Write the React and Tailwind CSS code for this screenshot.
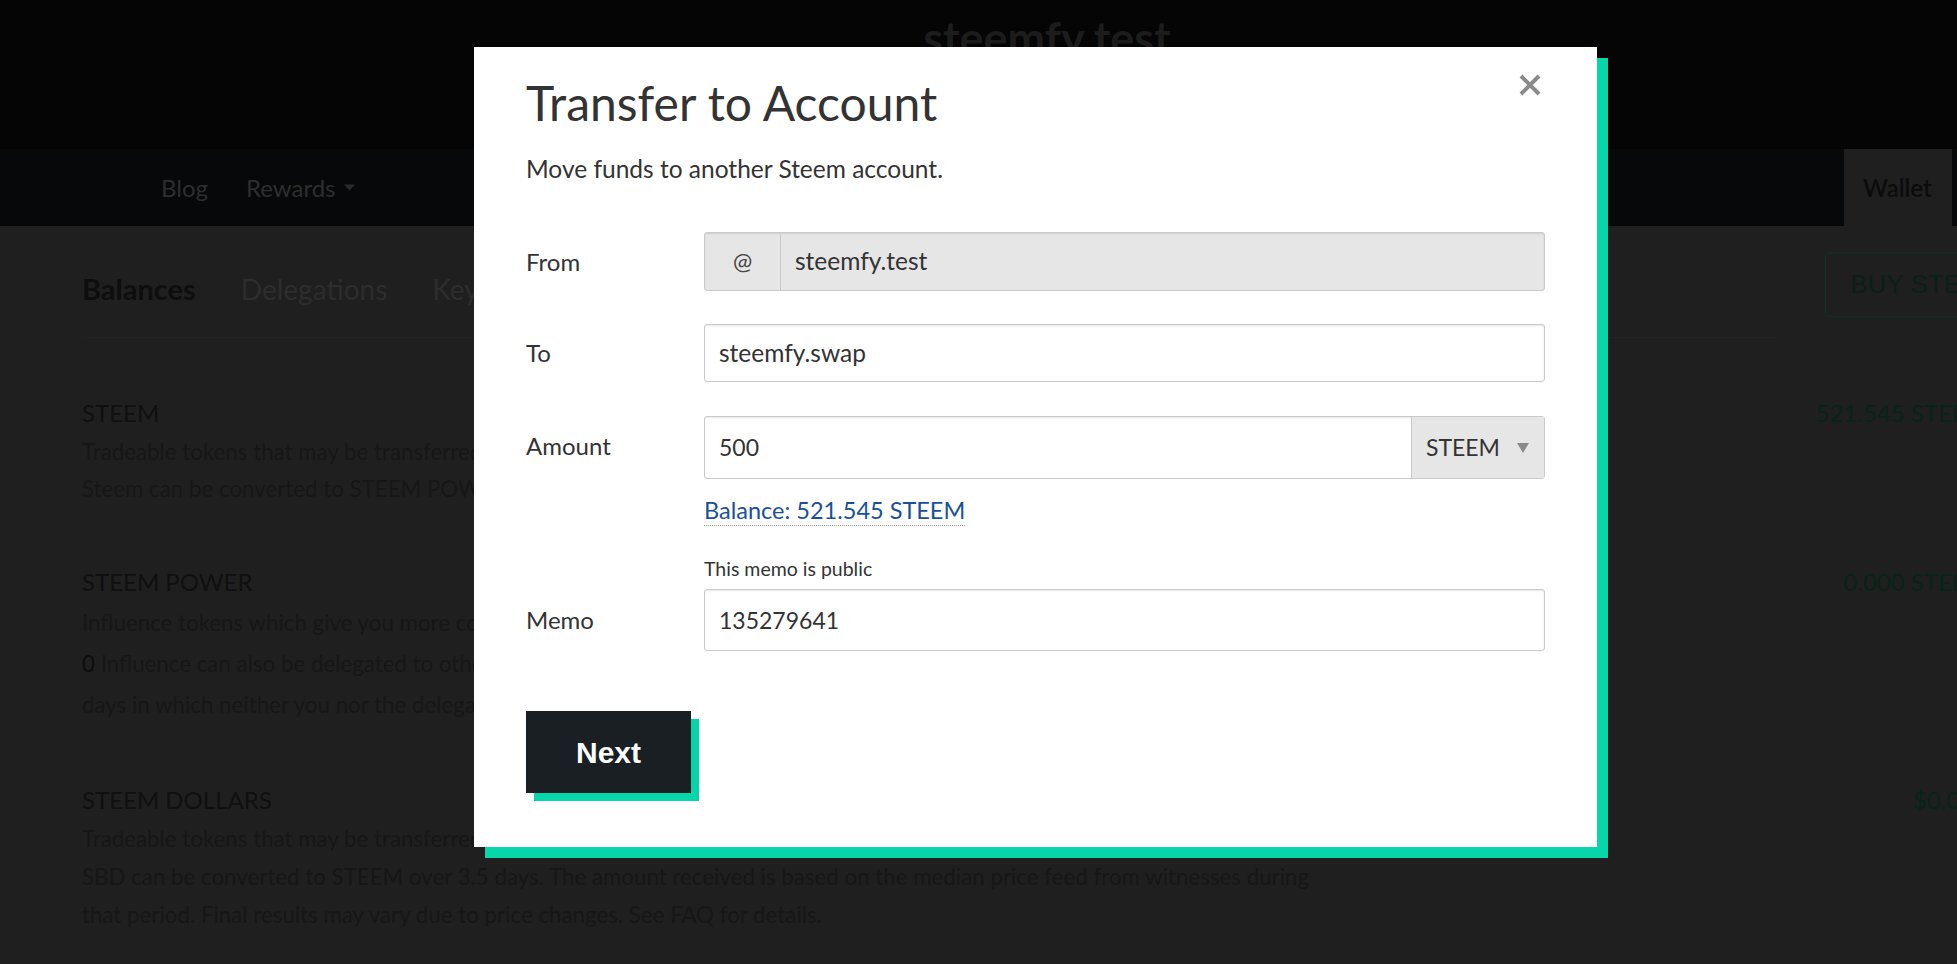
export default function App() {
  const inputBase =
    "border border-[#cacaca] rounded-[3px] shadow-[inset_0_1px_2px_rgba(10,10,10,0.1)]";
  return (
    <div className="relative w-[1957px] h-[964px] overflow-hidden bg-[#1f1f1f] font-['Lato',sans-serif]">
      {/* header */}
      <header className="h-[149px] bg-[#050505] flex justify-center pl-[137px] pt-[11px]">
        <div className="text-[45px] leading-[54px] font-bold text-[#1c1c1c]">steemfy.test</div>
      </header>
      {/* nav */}
      <nav className="h-[77px] bg-[#07080a] flex items-stretch">
        <div className="flex items-center pl-[161px] gap-[38px] text-[24px] text-[#2e2e2e]">
          <span>Blog</span>
          <span className="flex items-center gap-[8px]">
            Rewards
            <svg width="11" height="7" viewBox="0 0 11 7">
              <path d="M0 0.5 L11 0.5 L5.5 6.5 Z" fill="#2a2a2a" />
            </svg>
          </span>
        </div>
        <div className="ml-auto mr-[5px] w-[108px] bg-[#1f1f1f] flex items-center pl-[19px] text-[24px] font-semibold text-[#0c0c0c]">
          Wallet
        </div>
      </nav>
      {/* main */}
      <main className="pl-[82px] pt-[26px]">
        <div className="flex w-[1943px] h-[65px] items-center justify-between">
          <div className="flex items-center gap-[45px] pt-[8px]">
            <span className="text-[29px] font-bold text-[#0e0e0e]">Balances</span>
            <span className="text-[28px] text-[#2d2d2d]">Delegations</span>
            <span className="text-[28px] text-[#2d2d2d]">Keys &amp; Permissions</span>
          </div>
          <div className="h-[65px] border border-[#0c3326] rounded-[5px] px-[24px] flex items-center text-[26px] text-[#0a2018] font-['Liberation_Sans',Arial,sans-serif]">
            BUY STEEM
          </div>
        </div>
        <div className="mt-[20px] w-[1694px] border-t border-[#222222]" />

        <div className="w-[1906px]">
          {/* STEEM */}
          <section className="mt-[55px] flex justify-between">
            <div>
              <div className="text-[24px] leading-[40px] text-[#101010]">STEEM</div>
              <div className="text-[22.3px] leading-[37px] text-[#171717] whitespace-nowrap">
                <div>Tradeable tokens that may be transferred anywhere at anytime.</div>
                <div>Steem can be converted to STEEM POWER in a process called powering up.</div>
              </div>
            </div>
            <div className="text-[24px] leading-[40px] text-[#072419]">521.545 STEEM</div>
          </section>
          {/* STEEM POWER */}
          <section className="mt-[55px] flex justify-between">
            <div>
              <div className="text-[24px] leading-[40px] text-[#101010]">STEEM POWER</div>
              <div className="text-[22.3px] leading-[41px] text-[#171717] whitespace-nowrap">
                <div>Influence tokens which give you more control over post payouts and allow you to earn on curation rewards.</div>
                <div>
                  <span className="text-[#0d0d0d]">0</span> Influence can also be delegated to others to help them engage on the platform. Delegations are returned after 5
                </div>
                <div>days in which neither you nor the delegatee can use that influence.</div>
              </div>
            </div>
            <div className="text-[24px] leading-[40px] text-[#072419]">0.000 STEEM</div>
          </section>
          {/* STEEM DOLLARS */}
          <section className="mt-[55px] flex justify-between">
            <div>
              <div className="text-[24px] leading-[40px] text-[#101010]">STEEM DOLLARS</div>
              <div className="text-[22.3px] leading-[38px] text-[#171717] whitespace-nowrap">
                <div>Tradeable tokens that may be transferred anywhere at anytime.</div>
                <div>SBD can be converted to STEEM over 3.5 days. The amount received is based on the median price feed from witnesses during</div>
                <div>that period. Final results may vary due to price changes. See FAQ for details.</div>
              </div>
            </div>
            <div className="text-[24px] leading-[40px] text-[#072419]">$0.000</div>
          </section>
        </div>
      </main>

      {/* modal */}
      <div className="absolute left-[474px] top-[47px] w-[1123px] h-[800px] bg-white shadow-[11px_11px_0_0_#06d6a9] px-[52px] pt-[28px] text-[#333333]">
        <svg
          className="absolute right-[56px] top-[27px]"
          width="22"
          height="22"
          viewBox="0 0 22 22"
        >
          <path d="M2 2 L20 20 M20 2 L2 20" stroke="#8a8a8a" strokeWidth="4" />
        </svg>
        <h1 className="text-[48px] leading-[56px] font-normal">Transfer to Account</h1>
        <p className="mt-[22px] text-[24.5px] leading-[32px]">Move funds to another Steem account.</p>

        {/* From */}
        <div className="mt-[47px] flex items-center">
          <div className="w-[178px] text-[24px]">From</div>
          <div className={`flex-1 h-[59px] flex bg-[#e6e6e6] ${inputBase}`}>
            <div className="w-[76px] border-r border-[#cacaca] flex items-center justify-center text-[23px] text-[#444]">@</div>
            <div className="flex items-center pl-[14px] text-[24.5px]">steemfy.test</div>
          </div>
        </div>

        {/* To */}
        <div className="mt-[33px] flex items-center">
          <div className="w-[178px] text-[24px]">To</div>
          <div className={`flex-1 h-[58px] flex items-center pl-[14px] bg-white text-[24.5px] ${inputBase}`}>
            steemfy.swap
          </div>
        </div>

        {/* Amount */}
        <div className="mt-[34px] flex items-center">
          <div className="w-[178px] text-[24px] pb-[4px]">Amount</div>
          <div className={`flex-1 h-[63px] flex bg-white ${inputBase}`}>
            <div className="flex-1 flex items-center pl-[14px] text-[23px]">500</div>
            <div className="w-[133px] border-l border-[#cacaca] bg-[#e6e6e6] flex items-center pl-[14px] text-[23px]">
              <span>STEEM</span>
              <svg className="ml-[17px]" width="12" height="10" viewBox="0 0 12 10">
                <path d="M0 0 L12 0 L6 10 Z" fill="#8a8a8a" />
              </svg>
            </div>
          </div>
        </div>

        {/* Balance */}
        <div className="pl-[178px] mt-[16px]">
          <span className="inline-block text-[23.5px] leading-[30px] text-[#1a5099] border-b border-dotted border-[#999]">
            Balance: 521.545 STEEM
          </span>
        </div>

        {/* Memo */}
        <div className="pl-[178px] mt-[31px] text-[19.5px] leading-[24px]">This memo is public</div>
        <div className="mt-[8px] flex items-center">
          <div className="w-[178px] text-[24px]">Memo</div>
          <div className={`flex-1 h-[62px] flex items-center pl-[14px] bg-white text-[23px] ${inputBase}`}>
            135279641
          </div>
        </div>

        <div className="mt-[60px] w-[165px] h-[82px] bg-[#1a1f24] shadow-[8px_8px_0_0_#06d6a9] flex items-center justify-center text-white font-bold text-[30px] font-['Liberation_Sans',Arial,sans-serif]">
          Next
        </div>
      </div>
    </div>
  );
}
